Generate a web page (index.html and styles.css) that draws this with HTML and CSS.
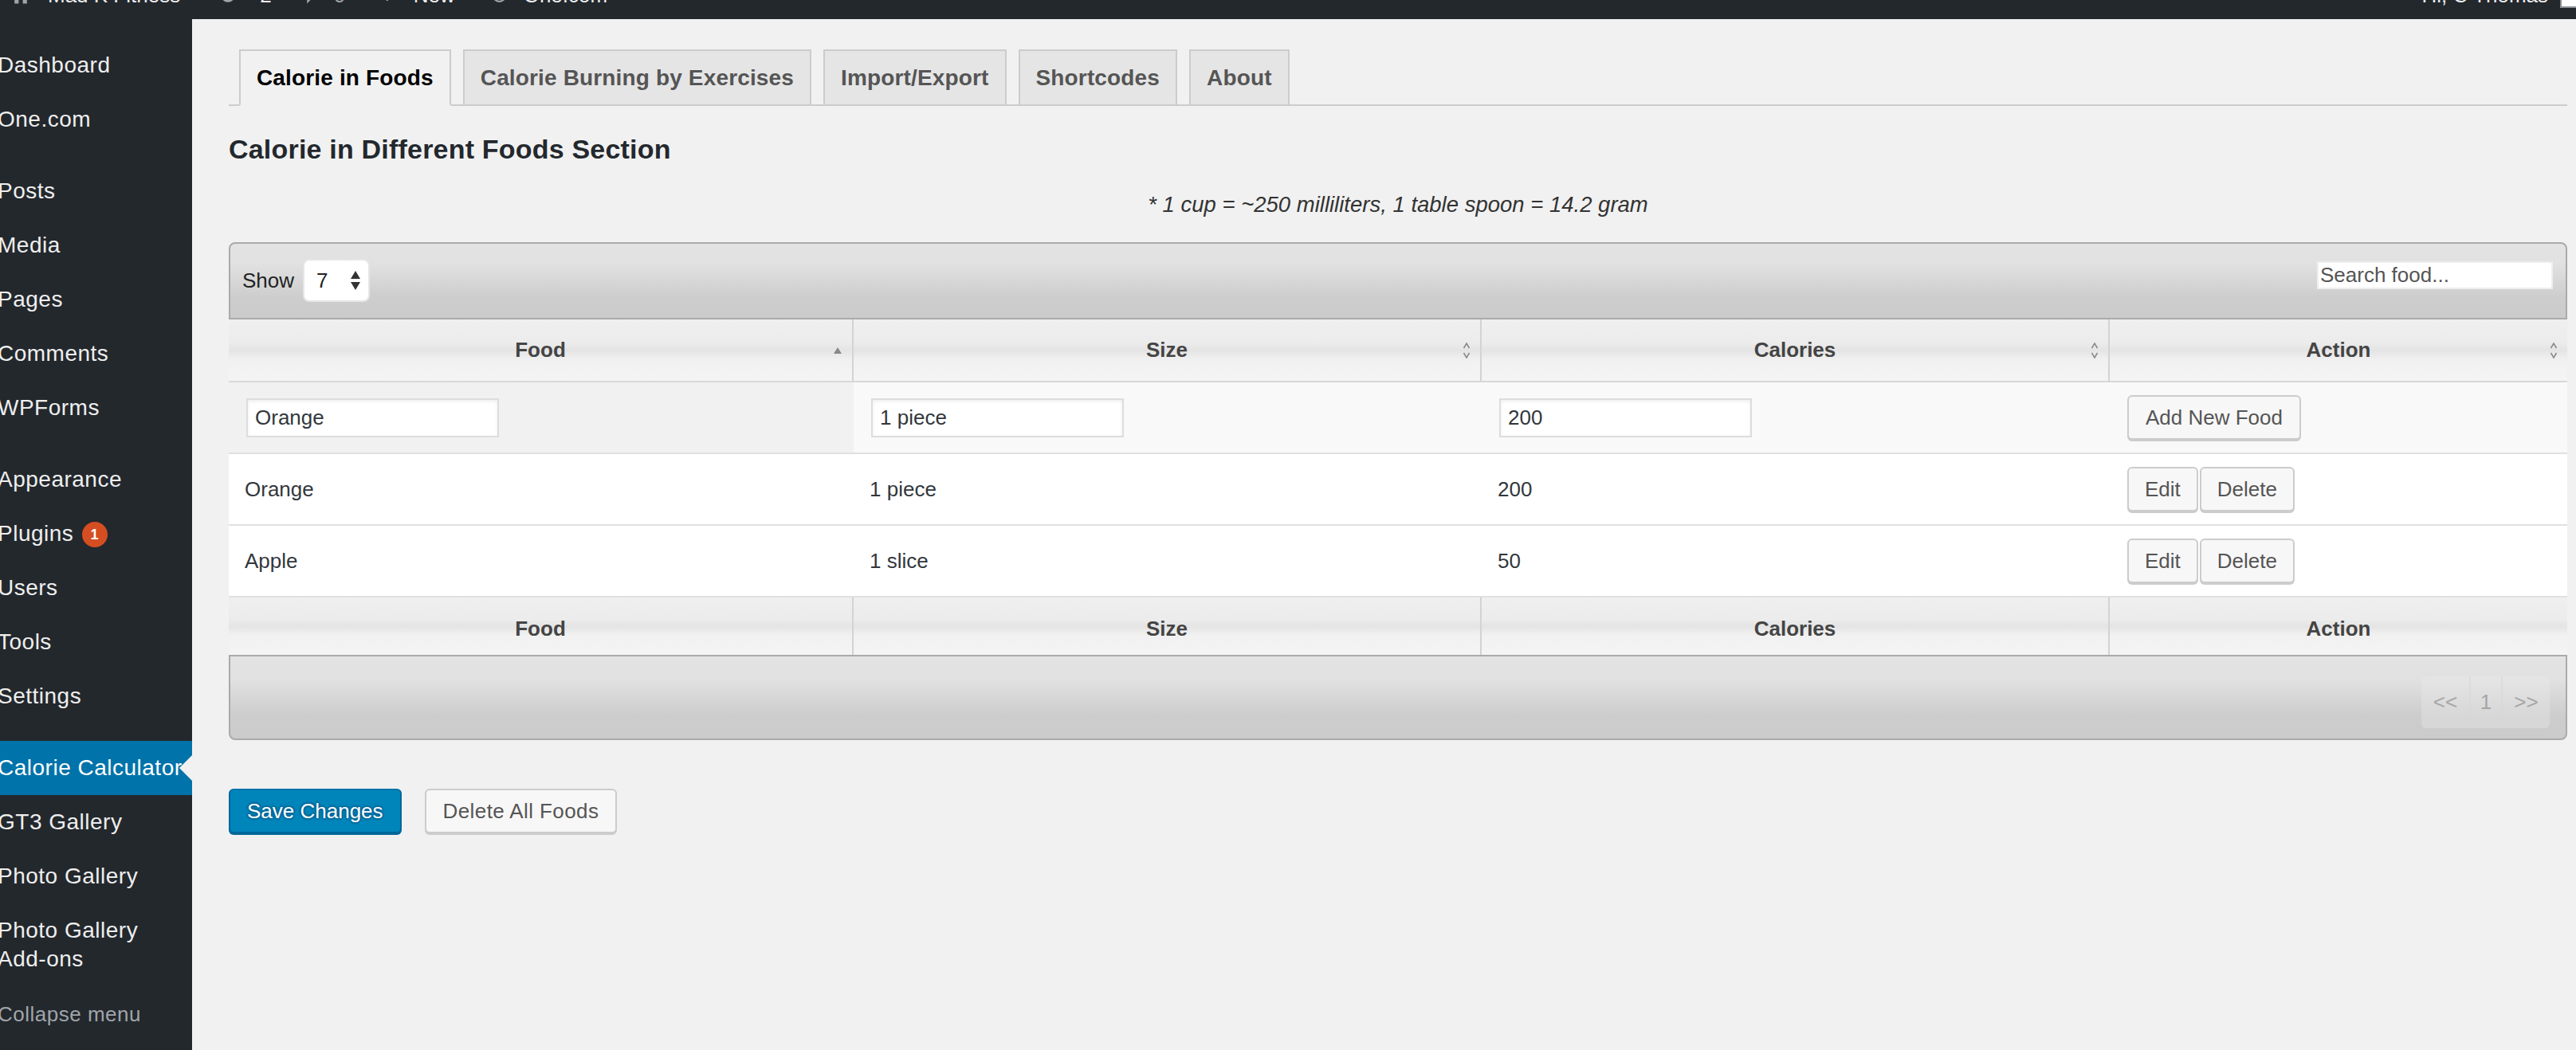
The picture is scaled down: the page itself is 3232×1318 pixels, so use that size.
FILE: index.html
```html
<!DOCTYPE html>
<html lang="en">
<head>
    <meta charset="UTF-8">
    <meta name="viewport" content="width=device-width, initial-scale=1.0">
    <title>Calorie Calculator</title>
    <link rel="stylesheet" href="styles.css">
</head>
<body>
    <div class="adminbar">
        <div class="adminbar-inner">
            <span class="ab-item ab-site">
                <svg class="ab-icon" viewBox="0 0 20 20" width="26" height="26"><path d="M10 2 L1 10 H4 V18 H8 V13 H12 V18 H16 V10 H19 Z" fill="#a0a5aa"/></svg>
                Mad K Fitness
            </span>
            <span class="ab-item ab-updates">
                <svg class="ab-icon" viewBox="0 0 20 20" width="22" height="26"><path d="M16.5 10 A6.5 6.5 0 1 1 10 3.5" stroke="#a0a5aa" stroke-width="3" fill="none"/></svg>
                2
            </span>
            <span class="ab-item ab-comments">
                <svg class="ab-icon" viewBox="0 0 20 20" width="28" height="26"><path d="M3 2 H17 V13 H9 L4 18 V13 H3 Z" fill="#a0a5aa"/></svg>
                <span class="ab-dim">0</span>
            </span>
            <span class="ab-item ab-new">
                <span class="ab-plus">+</span>
                New
            </span>
            <span class="ab-item ab-onecom">
                <svg class="ab-icon" viewBox="0 0 20 20" width="21" height="26"><circle cx="10" cy="10" r="7.5" stroke="#a0a5aa" stroke-width="2" fill="none"/></svg>
                One.com
            </span>
            <span class="ab-account">
                Hi, C Thomas
                <span class="avatar"></span>
            </span>
        </div>
    </div>

    <div class="layout">
        <nav class="sidebar">
            <ul class="menu">
                <li class="menu-item"><span class="label">Dashboard</span></li>
                <li class="menu-item"><span class="label">One.com</span></li>
                <li class="menu-sep"></li>
                <li class="menu-item"><span class="label">Posts</span></li>
                <li class="menu-item"><span class="label">Media</span></li>
                <li class="menu-item"><span class="label">Pages</span></li>
                <li class="menu-item"><span class="label">Comments</span></li>
                <li class="menu-item"><span class="label">WPForms</span></li>
                <li class="menu-sep"></li>
                <li class="menu-item"><span class="label">Appearance</span></li>
                <li class="menu-item"><span class="label">Plugins <span class="badge">1</span></span></li>
                <li class="menu-item"><span class="label">Users</span></li>
                <li class="menu-item"><span class="label">Tools</span></li>
                <li class="menu-item"><span class="label">Settings</span></li>
                <li class="menu-sep"></li>
                <li class="menu-item current"><span class="label">Calorie Calculator</span></li>
                <li class="menu-item"><span class="label">GT3 Gallery</span></li>
                <li class="menu-item"><span class="label">Photo Gallery</span></li>
                <li class="menu-item"><span class="label">Photo Gallery Add-ons</span></li>
                <li class="collapse"><span class="label">Collapse menu</span></li>
            </ul>
        </nav>

        <main class="content">
            <div class="nav-tabs">
                <span class="nav-tab active">Calorie in Foods</span>
                <span class="nav-tab">Calorie Burning by Exercises</span>
                <span class="nav-tab">Import/Export</span>
                <span class="nav-tab">Shortcodes</span>
                <span class="nav-tab">About</span>
            </div>

            <h2 class="section-title">Calorie in Different Foods Section</h2>
            <p class="note">* 1 cup = ~250 milliliters, 1 table spoon = 14.2 gram</p>

            <div class="dt-wrapper">
                <div class="dt-toolbar dt-toolbar-top">
                    <div class="dt-length">
                        <span>Show</span>
                        <span class="dt-select">
                            7
                            <svg viewBox="0 0 14 26" width="14" height="26"><path d="M7 1 L13 11 H1 Z M7 25 L13 15 H1 Z" fill="#333"/></svg>
                        </span>
                    </div>
                    <input class="dt-search" type="text" placeholder="Search food...">
                </div>

                <table class="dt-table">
                    <colgroup>
                        <col class="col-food">
                        <col class="col-size">
                        <col class="col-cal">
                        <col class="col-action">
                    </colgroup>
                    <thead>
                        <tr>
                            <th>Food
                                <svg class="sort-icon" viewBox="0 0 12 10" width="12" height="10"><path d="M6 1 L11 9 H1 Z" fill="#888"/></svg>
                            </th>
                            <th>Size
                                <svg class="sort-icon" viewBox="0 0 10 22" width="10" height="22"><path d="M1.5 8 L5 2 L8.5 8 M1.5 14 L5 20 L8.5 14" stroke="#8a8a8a" stroke-width="1.6" fill="none"/></svg>
                            </th>
                            <th>Calories
                                <svg class="sort-icon" viewBox="0 0 10 22" width="10" height="22"><path d="M1.5 8 L5 2 L8.5 8 M1.5 14 L5 20 L8.5 14" stroke="#8a8a8a" stroke-width="1.6" fill="none"/></svg>
                            </th>
                            <th>Action
                                <svg class="sort-icon" viewBox="0 0 10 22" width="10" height="22"><path d="M1.5 8 L5 2 L8.5 8 M1.5 14 L5 20 L8.5 14" stroke="#8a8a8a" stroke-width="1.6" fill="none"/></svg>
                            </th>
                        </tr>
                    </thead>
                    <tbody>
                        <tr class="new-row">
                            <td><input class="dt-input" type="text" value="Orange"></td>
                            <td><input class="dt-input" type="text" value="1 piece"></td>
                            <td><input class="dt-input" type="text" value="200"></td>
                            <td><span class="button">Add New Food</span></td>
                        </tr>
                        <tr>
                            <td>Orange</td>
                            <td>1 piece</td>
                            <td>200</td>
                            <td><span class="btn-group"><span class="button">Edit</span><span class="button">Delete</span></span></td>
                        </tr>
                        <tr>
                            <td>Apple</td>
                            <td>1 slice</td>
                            <td>50</td>
                            <td><span class="btn-group"><span class="button">Edit</span><span class="button">Delete</span></span></td>
                        </tr>
                    </tbody>
                    <tfoot>
                        <tr>
                            <th>Food</th>
                            <th>Size</th>
                            <th>Calories</th>
                            <th>Action</th>
                        </tr>
                    </tfoot>
                </table>

                <div class="dt-toolbar dt-toolbar-bottom">
                    <div class="paginate">
                        <span class="page prev">&lt;&lt;</span>
                        <span class="page num">1</span>
                        <span class="page next">&gt;&gt;</span>
                    </div>
                </div>
            </div>

            <div class="form-actions">
                <span class="button button-primary">Save Changes</span>
                <span class="button button-wide">Delete All Foods</span>
            </div>
        </main>
    </div>
</body>
</html>
```

FILE: styles.css
```css
* {
    box-sizing: border-box;
}
body {
    margin: 0;
    height: 1318px;
    overflow: hidden;
    background: #f1f1f1;
    color: #32373c;
    font-family: "Liberation Sans", Arial, sans-serif;
    font-size: 26px;
}

/* admin bar (mostly scrolled off) */
.adminbar {
    height: 24px;
    background: #23282d;
    overflow: hidden;
}
.adminbar-inner {
    display: flex;
    align-items: center;
    height: 64px;
    margin-top: -38px;
    line-height: 64px;
    color: #eee;
    white-space: nowrap;
}
.ab-item {
    display: flex;
    align-items: center;
}
.ab-site { margin-left: 13px; }
.ab-site .ab-icon { margin-right: 21px; }
.ab-updates { margin-left: 49px; }
.ab-updates .ab-icon { margin-right: 29px; }
.ab-comments { margin-left: 38px; }
.ab-comments .ab-icon { margin-right: 12px; }
.ab-dim { color: #a0a5aa; }
.ab-new { margin-left: 44px; }
.ab-plus {
    color: #a0a5aa;
    font-size: 30px;
    margin-right: 24px;
}
.ab-onecom { margin-left: 45px; }
.ab-onecom .ab-icon { margin-right: 20px; }
.ab-account {
    margin-left: auto;
    margin-right: -12px;
    display: flex;
    align-items: center;
    gap: 15px;
}
.avatar {
    width: 32px;
    height: 32px;
    border: 2px solid #8c8f94;
    background: #fff;
}

.layout {
    display: flex;
    height: 1294px;
}

/* sidebar */
.sidebar {
    width: 241px;
    flex: none;
    background: #23282d;
    overflow: hidden;
}
.menu {
    list-style: none;
    margin: 24px 0 0;
    padding: 0;
}
.menu-item {
    position: relative;
    padding: 16px 0;
    font-size: 28px;
    line-height: 36px;
    letter-spacing: 0.5px;
    color: #eee;
}
.menu-item .label,
.collapse .label {
    display: block;
    margin-left: -3px;
}
.menu-sep {
    height: 22px;
}
.menu-item.current {
    background: #0073aa;
    color: #fff;
}
.menu-item.current::after {
    content: "";
    position: absolute;
    right: 0;
    top: 50%;
    margin-top: -16px;
    border: 16px solid transparent;
    border-right-color: #f1f1f1;
    border-left-width: 0;
}
.badge {
    display: inline-block;
    vertical-align: 2px;
    min-width: 32px;
    height: 32px;
    margin-left: 2px;
    padding: 0 10px;
    border-radius: 16px;
    background: #d54e21;
    color: #fff;
    font-size: 18px;
    font-weight: bold;
    line-height: 32px;
    letter-spacing: 0;
    text-align: center;
}
.collapse {
    padding: 17px 0;
    font-size: 26px;
    line-height: 36px;
    letter-spacing: 0.5px;
    color: #a0a5aa;
}

/* main area */
.content {
    flex: 1;
    min-width: 0;
    padding: 38px 11px 0 46px;
}
.nav-tabs {
    display: flex;
    gap: 15px;
    padding-left: 13px;
    border-bottom: 2px solid #ccc;
}
.nav-tab {
    margin-bottom: -2px;
    padding: 0 20px;
    border: 2px solid #ccc;
    background: #e5e5e5;
    color: #555;
    font-size: 28px;
    font-weight: bold;
    letter-spacing: 0.15px;
    line-height: 67px;
}
.nav-tab.active {
    background: #f1f1f1;
    color: #000;
    border-bottom-color: #f1f1f1;
}
.section-title {
    margin: 32px 0 0;
    color: #23282d;
    font-size: 34px;
    letter-spacing: 0.2px;
    line-height: 44px;
}
.note {
    margin: 30px 0 0;
    text-align: center;
    font-size: 27.5px;
    font-style: italic;
    line-height: 36px;
    color: #333;
}

/* data table */
.dt-wrapper {
    margin-top: 29px;
}
.dt-toolbar {
    display: flex;
    border: 2px solid #aaa;
    background: linear-gradient(#e3e3e3 0%, #e1e1e1 28%, #cdcdcd 72%, #cbcbcb 100%);
    color: #222;
}
.dt-toolbar-top {
    height: 97px;
    padding: 19px 16px 0 15px;
    justify-content: space-between;
    align-items: flex-start;
    border-radius: 8px 8px 0 0;
}
.dt-toolbar-bottom {
    height: 107px;
    padding: 25px 20px 0;
    justify-content: flex-end;
    align-items: flex-start;
    border-radius: 0 0 8px 8px;
}
.dt-length {
    display: flex;
    align-items: center;
    gap: 11px;
    height: 54px;
}
.dt-select {
    display: flex;
    align-items: center;
    justify-content: space-between;
    width: 84px;
    height: 54px;
    padding: 0 9px 0 15px;
    border: 2px solid #e6e6e6;
    border-radius: 8px;
    background: #fff;
    color: #222;
}
.dt-search {
    width: 296px;
    height: 35px;
    margin-top: 3px;
    padding: 0 2px;
    border: 2px solid #eee;
    background: #fff;
    font: inherit;
    color: #333;
    outline: none;
}
.dt-search::placeholder {
    color: #555;
}
.dt-table {
    width: 100%;
    border-collapse: separate;
    border-spacing: 0;
    table-layout: fixed;
    background: #fff;
}
.col-food { width: 784px; }
.col-size { width: 788px; }
.col-cal { width: 788px; }
.col-action { width: 574px; }
.dt-table th {
    position: relative;
    padding: 0;
    color: #444;
    font-weight: bold;
    text-align: center;
    background: linear-gradient(#efefef 0%, #ececec 38%, #e4e4e4 50%, #f1f1f1 66%, #f4f4f4 100%);
    border-right: 2px solid #d3d3d3;
}
.dt-table th:last-child {
    border-right: 0;
}
.dt-table thead th {
    height: 79px;
    border-bottom: 2px solid #d8d8d8;
}
.dt-table tfoot th {
    height: 72px;
    padding-top: 6px;
}
.sort-icon {
    position: absolute;
    right: 12px;
    top: 50%;
    transform: translateY(-50%);
}
.dt-table td {
    height: 90px;
    padding: 0 20px;
    vertical-align: middle;
    border-bottom: 2px solid #e0e0e0;
    color: #32373c;
}
.new-row td {
    background: #f9f9f9;
}
.new-row td:first-child {
    background: #f1f1f1;
}
.dt-input {
    width: 317px;
    height: 49px;
    margin-left: 2px;
    padding: 0 9px;
    border: 2px solid #ddd;
    box-shadow: inset 0 2px 4px rgba(0, 0, 0, 0.07);
    background: #fff;
    font: inherit;
    color: #32373c;
    outline: none;
}
.paginate {
    display: flex;
    height: 65px;
    border-radius: 6px;
    overflow: hidden;
    background: rgba(235, 235, 235, 0.35);
    color: #a6a6a6;
    line-height: 65px;
}
.page {
    text-align: center;
    border-left: 2px solid rgba(215, 215, 215, 0.6);
}
.page:first-child {
    border-left: 0;
}
.prev { width: 60px; }
.num { width: 40px; }
.next { width: 61px; }

/* buttons */
.button {
    display: inline-block;
    height: 56px;
    margin-left: 2px;
    padding: 0 21px;
    border: 2px solid #ccc;
    border-radius: 6px;
    background: #f7f7f7;
    box-shadow: 0 2px 0 #ccc;
    color: #555;
    font-size: 26px;
    line-height: 52px;
    white-space: nowrap;
}
.btn-group {
    display: inline-flex;
    gap: 2px;
}
.btn-group .button {
    padding: 0 20px;
}
.btn-group .button + .button {
    margin-left: 0;
}
.form-actions {
    display: flex;
    gap: 29px;
    margin-top: 61px;
}
.form-actions .button {
    margin-left: 0;
}
.button-wide {
    letter-spacing: 0.4px;
}
.button-primary {
    background: #0085ba;
    border-color: #0073aa #006799 #006799;
    box-shadow: 0 2px 0 #006799;
    color: #fff;
    text-shadow: 0 -2px 2px #006799, 2px 0 2px #006799, 0 2px 2px #006799, -2px 0 2px #006799;
}
```
